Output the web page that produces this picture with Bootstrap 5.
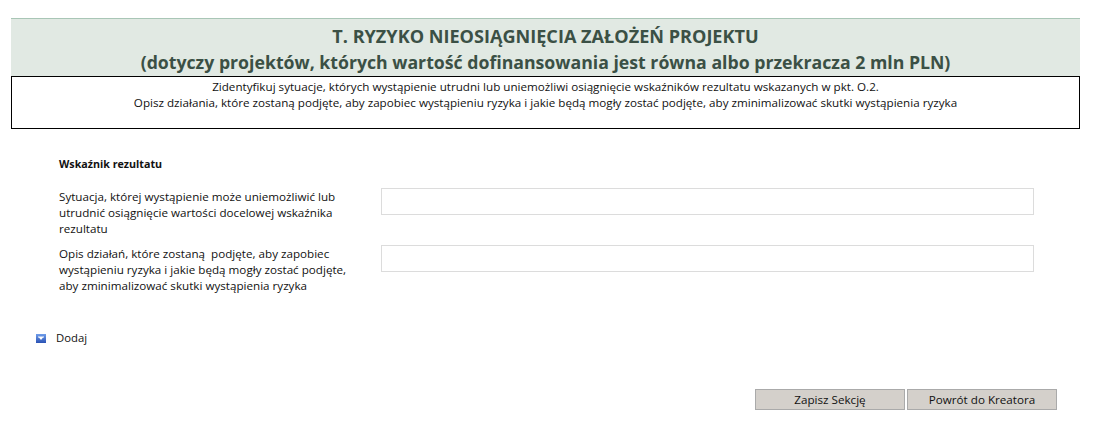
<!DOCTYPE html>
<html lang="pl">
<head>
<meta charset="utf-8">
<title>Ryzyko</title>
<link href="https://cdn.jsdelivr.net/npm/bootstrap@5.3.0/dist/css/bootstrap.min.css" rel="stylesheet">
<style>
html,body{height:428px;overflow:hidden}
body{background:#fff;color:#111;font-family:"Open Sans","Noto Sans",sans-serif;font-size:11.65px;line-height:16px}
.sheet{width:1069px;margin-left:11px;padding-top:18px}
.head-band{background:#e1e9e3;border-top:1px solid #a9c6b6;color:#3b5045;font-size:18.1px;font-weight:700;line-height:26px;height:58px;padding-top:4px;text-align:center}
.head-sub{font-size:17.7px}
.note-box{border:1px solid #000;height:53px;line-height:16px;padding-top:2px;text-align:center;color:#111}
.form-area{padding:26px 0 0 48px}
.sec-title{font-size:10.7px;font-weight:700;height:31px;line-height:18px;margin-bottom:0}
.q-row{width:975px;gap:21px}
.q-label{width:301px;flex:none;line-height:16.2px;margin:0;padding-top:3px}
.q-input{flex:1;height:27px;border:1px solid #dcdcdc;background:#fff;border-radius:0;padding:0;margin:2px 0 0}
.r1{height:57px}.r2{height:70px}
.add-row{margin:16px 0 0 25px;font-size:11.3px;gap:10px;height:18px}
.add-ico{width:10px;height:9px;display:block}
.btn-row{width:1046px;margin-top:42px;gap:2px}
.act-btn{width:150px;height:21px;padding:0;border:1px solid #aaa;border-radius:0;background:#d4d0cb;color:#111;font-size:11.65px;line-height:18px}
.act-btn:hover{background:#d4d0cb;border-color:#aaa}
</style>
</head>
<body>
<div class="sheet">
  <div class="head-band">T. RYZYKO NIEOSIĄGNIĘCIA ZAŁOŻEŃ PROJEKTU<br><span class="head-sub">(dotyczy projektów, których wartość dofinansowania jest równa albo przekracza 2 mln PLN)</span></div>
  <div class="note-box">Zidentyfikuj sytuacje, których wystąpienie utrudni lub uniemożliwi osiągnięcie wskaźników rezultatu wskazanych w pkt. O.2.<br>Opisz działania, które zostaną podjęte, aby zapobiec wystąpieniu ryzyka i jakie będą mogły zostać podjęte, aby zminimalizować skutki wystąpienia ryzyka</div>
  <div class="form-area">
    <p class="sec-title">Wskaźnik rezultatu</p>
    <div class="q-row r1 d-flex">
      <label class="q-label" for="f1">Sytuacja, której wystąpienie może uniemożliwić lub utrudnić osiągnięcie wartości docelowej wskaźnika rezultatu</label>
      <input id="f1" class="q-input form-control" type="text">
    </div>
    <div class="q-row r2 d-flex">
      <label class="q-label" for="f2">Opis działań, które zostaną&nbsp; podjęte, aby zapobiec wystąpieniu ryzyka i jakie będą mogły zostać podjęte, aby zminimalizować skutki wystąpienia ryzyka</label>
      <input id="f2" class="q-input form-control" type="text">
    </div>
  </div>
  <div class="add-row d-flex align-items-center">
    <svg class="add-ico" viewBox="0 0 10 9" aria-hidden="true">
      <defs><linearGradient id="g" x1="0" y1="0" x2="0" y2="1"><stop offset="0" stop-color="#6f9dea"/><stop offset="1" stop-color="#2a52b4"/></linearGradient></defs>
      <rect width="10" height="9" fill="url(#g)"/>
      <path d="M2 2.500h6v1H7L5 6 3 3.500H2z" fill="#fff"/>
    </svg>
    <span>Dodaj</span>
  </div>
  <div class="btn-row d-flex justify-content-end">
    <button type="button" class="btn act-btn">Zapisz Sekcję</button>
    <button type="button" class="btn act-btn">Powrót do Kreatora</button>
  </div>
</div>
</body>
</html>
